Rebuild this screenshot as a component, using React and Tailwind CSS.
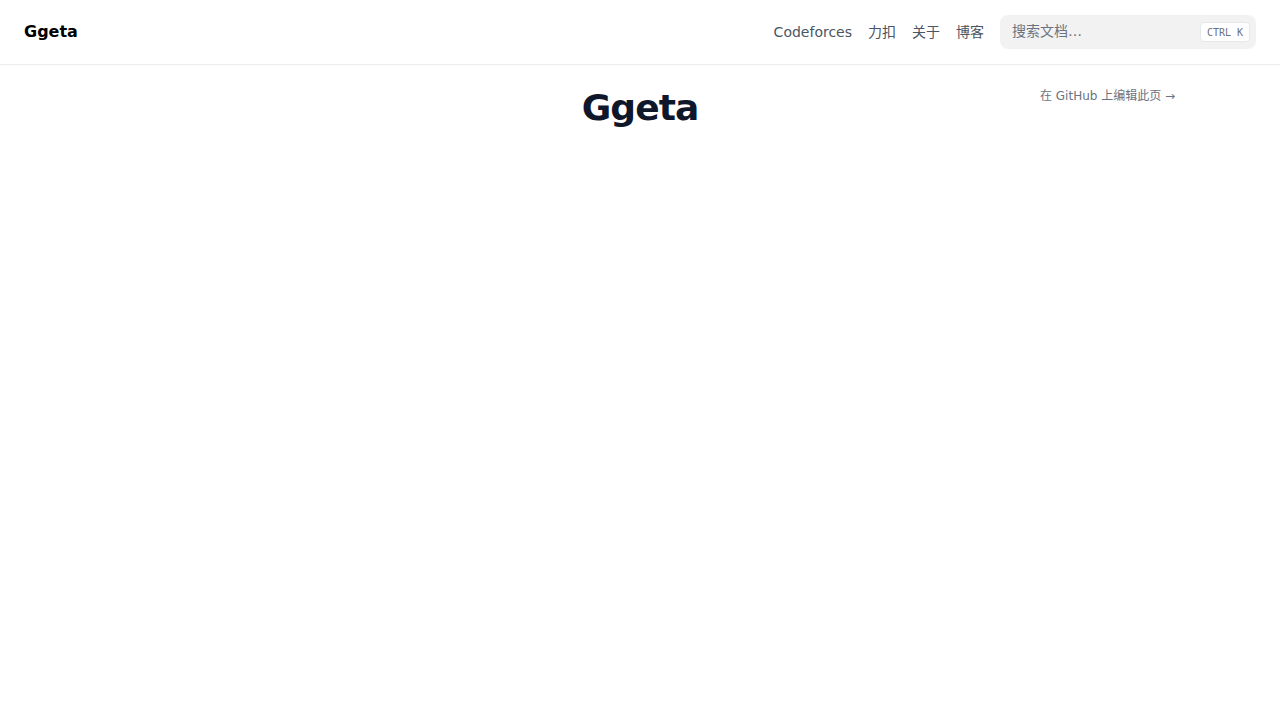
const navLinks = [
  { label: "Codeforces", href: "#codeforces" },
  { label: "力扣", href: "#leetcode" },
  { label: "关于", href: "#about" },
  { label: "博客", href: "#blog" },
];

function Navbar() {
  return (
    <header className="sticky top-0 z-20 bg-white shadow-[0_2px_4px_rgba(0,0,0,0.02),0_1px_0_rgba(0,0,0,0.06)]">
      <nav className="flex h-16 items-center gap-4 px-6">
        <a href="#home" className="mr-auto text-base font-extrabold text-black">
          Ggeta
        </a>
        {navLinks.map((link) => (
          <a key={link.href} href={link.href} className="text-sm whitespace-nowrap text-[#4b5563]">
            {link.label}
          </a>
        ))}
        <div className="relative w-64">
          <input
            type="search"
            aria-label="搜索文档"
            placeholder="搜索文档…"
            className="block w-full rounded-lg bg-black/5 px-3 py-2 text-sm leading-tight text-gray-800 placeholder:text-[#6b7280]"
          />
          <kbd className="pointer-events-none absolute inset-y-0 right-1.5 my-[7px] flex items-center rounded border border-[#e5e7eb] bg-white px-1.5 font-['DejaVu_Sans_Mono',monospace] text-[10px] font-medium text-[#6b7280]">
            CTRL K
          </kbd>
        </div>
      </nav>
    </header>
  );
}

export default function App() {
  return (
    <div className="min-h-screen bg-white font-['DejaVu_Sans','Noto_Sans_CJK_SC',sans-serif] text-slate-900">
      <Navbar />
      <div className="mx-auto flex max-w-[1440px]">
        <div className="w-60 shrink-0" />
        <main className="min-w-0 flex-1 px-6 pt-6">
          <h1 className="text-center text-4xl leading-10 font-bold tracking-tight text-[#0f172a]">Ggeta</h1>
        </main>
        <aside className="w-60 shrink-0 pt-6">
          <a href="#edit" className="block text-xs leading-4 text-[#6b7280]">
            在 GitHub 上编辑此页 →
          </a>
        </aside>
      </div>
    </div>
  );
}
